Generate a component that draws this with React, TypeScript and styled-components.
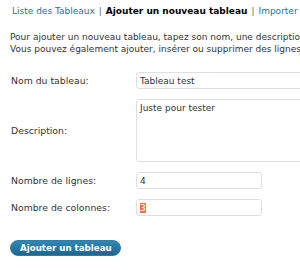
import React from "react";
import styled, { createGlobalStyle } from "styled-components";

const GlobalStyle = createGlobalStyle`
  html, body {
    margin: 0;
    padding: 0;
    background: #fff;
    overflow: hidden;
  }
  body {
    font-family: "DejaVu Sans", Verdana, sans-serif;
    font-size: 9px;
    color: #333;
  }
`;

const Page = styled.div`
  width: 300px;
  height: 270px;
  padding: 4px 0 0 10px;
  box-sizing: border-box;
  overflow: hidden;
`;

const SubNav = styled.ul`
  list-style: none;
  margin: 0;
  padding: 0 0 0 2px;
  display: flex;
  white-space: nowrap;
  line-height: 14px;
`;

const NavItem = styled.li<{ $current?: boolean }>`
  color: ${(p) => (p.$current ? "#000" : "#21759b")};
  font-weight: ${(p) => (p.$current ? "bold" : "normal")};
`;

const Sep = styled.span`
  color: #666;
  margin: 0 4px;
`;

const Intro = styled.p`
  margin: 13px 0 0;
  line-height: 12.4px;
  white-space: nowrap;
`;

const Form = styled.div`
  display: grid;
  grid-template-columns: 126px 1fr;
  row-gap: 10px;
  align-items: center;
  margin-top: 16px;
`;

const Label = styled.label`
  padding-left: 1px;
  font-size: 9.3px;
`;

const Field = styled.div<{ $width: number; $height: number }>`
  width: ${(p) => p.$width}px;
  height: ${(p) => p.$height}px;
  border: 1px solid #dfdfdf;
  border-radius: 3px;
  background: #fff;
  box-sizing: border-box;
  padding: 2px 3px;
  color: #333;
  line-height: 12px;
`;

const Selected = styled.span`
  background: #f07446;
  color: #fff;
`;

const Button = styled.button`
  display: block;
  margin-top: 24px;
  font-family: "DejaVu Sans", Verdana, sans-serif;
  font-size: 8.7px;
  font-weight: bold;
  color: #fff;
  border: 1px solid #2a7fab;
  border-radius: 9px;
  background: linear-gradient(#3187b4, #1d6790);
  padding: 0 9px;
  width: 111px;
  height: 16px;
  line-height: 14px;
  white-space: nowrap;
  cursor: pointer;
`;

export default function App() {
  return (
    <>
      <GlobalStyle />
      <Page>
        <SubNav>
          <NavItem>Liste des Tableaux</NavItem>
          <Sep>|</Sep>
          <NavItem $current>Ajouter un nouveau tableau</NavItem>
          <Sep>|</Sep>
          <NavItem>Importer</NavItem>
        </SubNav>
        <Intro>
          Pour ajouter un nouveau tableau, tapez son nom, une description
          <br />
          Vous pouvez également ajouter, insérer ou supprimer des lignes
        </Intro>
        <Form>
          <Label>Nom du tableau:</Label>
          <Field $width={200} $height={17}>Tableau test</Field>
          <Label>Description:</Label>
          <Field $width={200} $height={63}>Juste pour tester</Field>
          <Label>Nombre de lignes:</Label>
          <Field $width={126} $height={17}>4</Field>
          <Label>Nombre de colonnes:</Label>
          <Field $width={126} $height={17}>
            <Selected>3</Selected>
          </Field>
        </Form>
        <Button>Ajouter un tableau</Button>
      </Page>
    </>
  );
}
